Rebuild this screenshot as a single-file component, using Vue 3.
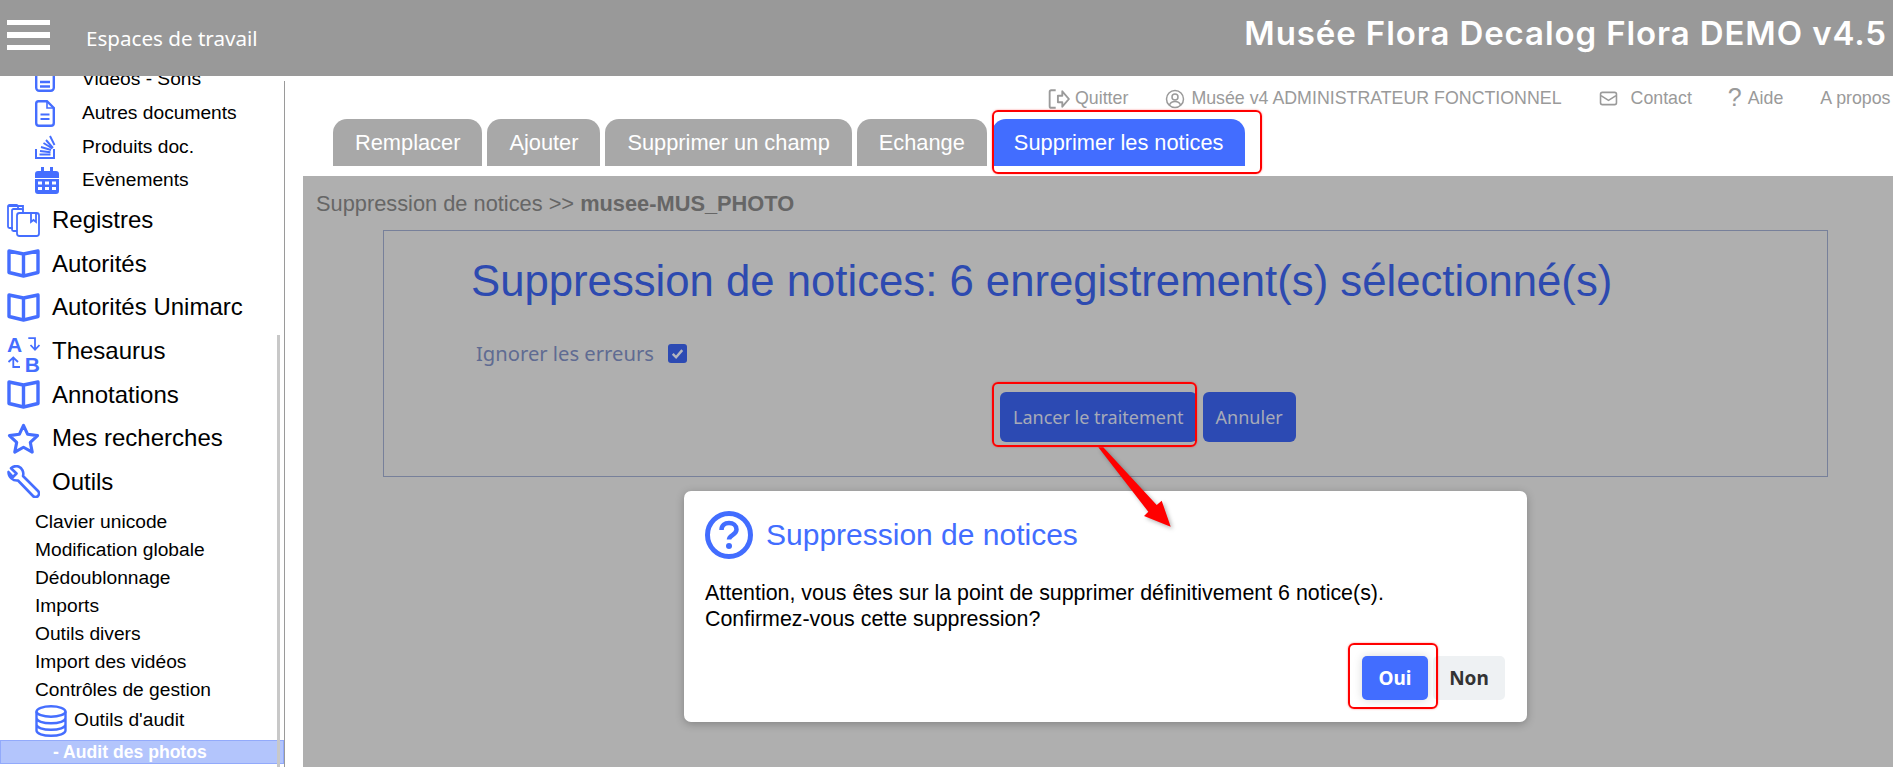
<script setup>
const subTop = [
  { label: 'Vidéos - Sons', icon: 'video' },
  { label: 'Autres documents', icon: 'doc' },
  { label: 'Produits doc.', icon: 'stack' },
  { label: 'Evènements', icon: 'cal' }
]
const main = [
  { label: 'Registres', icon: 'reg' },
  { label: 'Autorités', icon: 'book' },
  { label: 'Autorités Unimarc', icon: 'book' },
  { label: 'Thesaurus', icon: 'thes' },
  { label: 'Annotations', icon: 'book' },
  { label: 'Mes recherches', icon: 'star' },
  { label: 'Outils', icon: 'wrench' }
]
const tools = ['Clavier unicode', 'Modification globale', 'Dédoublonnage', 'Imports', 'Outils divers', 'Import des vidéos', 'Contrôles de gestion']
const tabs = ['Remplacer', 'Ajouter', 'Supprimer un champ', 'Echange']
</script>

<template>
  <div class="root">
    <svg class="defs" aria-hidden="true">
      <symbol id="video" viewBox="0 0 24 27" preserveAspectRatio="xMinYMid"><rect x="1.2" y="1.2" width="17.6" height="24.600" rx="3" fill="none" stroke="currentColor" stroke-width="2.400"/><path d="M5 17h10M5 21.500h10" stroke="currentColor" stroke-width="2.400"/></symbol>
      <symbol id="doc" viewBox="0 0 24 27" preserveAspectRatio="xMinYMid"><path d="M3.500 1.200H12L18.800 8V23a2.800 2.800 0 0 1-2.800 2.800H4A2.800 2.800 0 0 1 1.200 23V3.500A2.300 2.300 0 0 1 3.500 1.200Z" fill="none" stroke="currentColor" stroke-width="2.400"/><path d="M12 1.500V8h6.500" fill="none" stroke="currentColor" stroke-width="1.600"/><path d="M5.500 14.500h9M5.500 19h9" stroke="currentColor" stroke-width="2.200"/></symbol>
      <symbol id="stack" viewBox="0 0 24 27" preserveAspectRatio="xMinYMid"><path d="M1 16v9h18v-9" fill="none" stroke="currentColor" stroke-width="2"/><path d="M4.500 21.500h11M5 18l10.500 1.200M6 14l10 3M8.500 10l8.800 5.500M11 7l7 8M15 3l4.500 9" stroke="currentColor" stroke-width="1.900" fill="none"/></symbol>
      <symbol id="cal" viewBox="0 0 24 27" preserveAspectRatio="xMinYMid"><path d="M6 0h3v4H15V0h3v4h3a3 3 0 0 1 3 3v4H0V7a3 3 0 0 1 3-3h3ZM0 12h24v12a3 3 0 0 1-3 3H3a3 3 0 0 1-3-3Z" fill="currentColor"/><path d="M3 14.500h4v3H3ZM10 14.500h4v3h-4ZM17 14.500h4v3h-4ZM3 20h4v3H3ZM10 20h4v3h-4ZM17 20h4v3h-4Z" fill="#fff"/></symbol>
      <symbol id="reg" viewBox="0 0 33 33"><g fill="none" stroke="currentColor" stroke-width="1.800"><path d="M11 5V2.500A1.500 1.500 0 0 0 9.500 1H2.500A1.500 1.500 0 0 0 1 2.500v20A1.500 1.500 0 0 0 2.500 24H6"/><path d="M1 2h15v4"/><path d="M16 9V6.500A1.500 1.500 0 0 0 14.500 5H6.500A1.500 1.500 0 0 0 5 6.500v19A1.500 1.500 0 0 0 6.500 27H10"/><rect x="10" y="9" width="22" height="23" rx="2.500"/><path d="M24 9V18l2.500-2 2.500 2V9"/></g></symbol>
      <symbol id="book" viewBox="0 0 33 30"><path d="M2 2.500 16.500 5.500 31 2.500V24L16.500 27.500 2 24ZM16.500 5.500V27.500" fill="none" stroke="currentColor" stroke-width="3.400" stroke-linejoin="round"/></symbol>
      <symbol id="thesarrows" viewBox="0 0 33 33"><path d="M21.300 3.200H28V14.500M23.500 10 28 14.800 32.500 10M6.300 22.500V32H13M1.500 27 6.300 22.500 11 27" fill="none" stroke="currentColor" stroke-width="1.800"/></symbol>
      <symbol id="star" viewBox="0 0 34 32"><path d="M17 2.500 21.300 11.700 31.500 13 24 20 26 30 17 25 8 30 10 20 2.500 13 12.700 11.700Z" fill="none" stroke="currentColor" stroke-width="3.200" stroke-linejoin="round"/></symbol>
      <symbol id="wrench" viewBox="0 0 33 33"><path d="M11.500 1.500A8 8 0 0 0 4 3.200L9.500 8.500 6 12 1.500 7A8.500 8.500 0 0 0 11 15.500L26 31a3.500 3.500 0 0 0 5-5L16 11A8 8 0 0 0 11.500 1.500Z" fill="none" stroke="currentColor" stroke-width="2.600" stroke-linejoin="round"/></symbol>
      <symbol id="db" viewBox="0 0 32 32"><g fill="none" stroke="currentColor" stroke-width="2.400"><ellipse cx="16" cy="6.500" rx="14.500" ry="5.300"/><path d="M1.500 6.500V25.500C1.500 28.500 8 30.800 16 30.800S30.500 28.500 30.500 25.500V6.500M1.500 13C1.500 16 8 18.300 16 18.300S30.500 16 30.500 13M1.500 19.500C1.500 22.500 8 24.800 16 24.800S30.500 22.500 30.500 19.500"/></g></symbol>
    </svg>

    <header class="header">
      <div class="burger"><span></span><span></span><span></span></div>
      <div class="workspaces">Espaces de travail</div>
      <div class="title">Musée Flora Decalog Flora DEMO v4.5</div>
    </header>

    <div class="body">
      <aside class="sidebar">
        <ul class="group sub-top">
          <li v-for="it in subTop" :key="it.label" class="sub-row">
            <svg class="sub-icon"><use :href="'#' + it.icon"/></svg>
            <span>{{ it.label }}</span>
          </li>
        </ul>
        <ul class="group mains">
          <li v-for="it in main" :key="it.label" class="main-row">
            <span v-if="it.icon === 'thes'" class="thes">
              <svg class="thes-arrows"><use href="#thesarrows"/></svg>
              <b class="thes-a">A</b><b class="thes-b">B</b>
            </span>
            <svg v-else class="main-icon"><use :href="'#' + it.icon"/></svg>
            <span>{{ it.label }}</span>
          </li>
        </ul>
        <ul class="group tools">
          <li v-for="t in tools" :key="t" class="tool-row">{{ t }}</li>
        </ul>
        <div class="audit-row">
          <svg class="db-icon"><use href="#db"/></svg>
          <span>Outils d'audit</span>
        </div>
        <div class="active-row">- Audit des photos</div>
        <div class="scrollbar"></div>
        <div class="divider"></div>
      </aside>

      <main class="content">
        <nav class="toplinks">
          <span class="link l-quit">
            <svg class="tl-icon" viewBox="0 0 20 20"><path d="M7 2H3a1.500 1.500 0 0 0-1.500 1.500v13A1.500 1.500 0 0 0 3 18h4M9 7h4V3l6 7-6 7v-4H9Z" fill="none" stroke="currentColor" stroke-width="1.700" stroke-linejoin="round"/></svg>
            Quitter
          </span>
          <span class="link l-user">
            <svg class="tl-icon user" viewBox="0 0 20 20"><g fill="none" stroke="currentColor" stroke-width="1.500"><circle cx="10" cy="10" r="8.500"/><circle cx="10" cy="8" r="3"/><path d="M4.500 16c1-3 3-3.500 5.500-3.500s4.500.5 5.500 3.500"/></g></svg>
            Musée v4 ADMINISTRATEUR FONCTIONNEL
          </span>
          <span class="link l-contact">
            <svg class="tl-icon mail" viewBox="0 0 20 16"><g fill="none" stroke="currentColor" stroke-width="1.700"><rect x="1.500" y="1.500" width="17" height="13" rx="2"/><path d="M2 5l8 5 8-5"/></g></svg>
            Contact
          </span>
          <span class="link l-help"><i class="q">?</i>Aide</span>
          <span class="link l-about">A propos</span>
        </nav>

        <div class="tabs">
          <button v-for="t in tabs" :key="t" class="tab">{{ t }}</button>
          <button class="tab active">Supprimer les notices</button>
        </div>

        <section class="panel">
          <div class="crumb">Suppression de notices &gt;&gt; <b>musee-MUS_PHOTO</b></div>
          <div class="frame">
            <h1 class="heading">Suppression de notices: 6 enregistrement(s) sélectionné(s)</h1>
            <div class="ignore">
              <span>Ignorer les erreurs</span>
              <span class="check">
                <svg viewBox="0 0 20 20"><path d="M5 10.500l3.500 3.500L15 6.500" fill="none" stroke="#b4b6be" stroke-width="2.600"/></svg>
              </span>
            </div>
            <div class="actions">
              <button class="btn">Lancer le traitement</button>
              <button class="btn">Annuler</button>
            </div>
          </div>
        </section>
      </main>
    </div>

    <div class="modal">
      <div class="modal-head">
        <svg class="q-icon" viewBox="0 0 48 48">
          <circle cx="24" cy="24" r="21.500" fill="none" stroke="currentColor" stroke-width="5"/>
          <path d="M16.500 19c0-4.500 3.300-7 7.500-7s7.500 2.500 7.500 6.500c0 5.500-7.500 5.500-7.500 10" fill="none" stroke="currentColor" stroke-width="4.500"/>
          <circle cx="24" cy="35" r="3" fill="currentColor"/>
        </svg>
        <h2>Suppression de notices</h2>
      </div>
      <p>Attention, vous êtes sur la point de supprimer définitivement 6 notice(s).<br>Confirmez-vous cette suppression?</p>
      <div class="modal-actions">
        <button class="m-btn yes">Oui</button>
        <button class="m-btn no">Non</button>
      </div>
    </div>

    <div class="mark mark-tab"></div>
    <div class="mark mark-run"></div>
    <div class="mark mark-yes"></div>
    <svg class="arrow" viewBox="0 0 90 95">
      <polygon points="4.300,2.300 9.300,2.300 62.700,60 67.700,55.700 76.700,81.700 50,71 54.300,66.700" fill="#f00"/>
    </svg>
  </div>
</template>

<style>
html, body { margin: 0; overflow: hidden; background: #fff; }
</style>

<style scoped>
.root { position: relative; width: 1893px; height: 767px; overflow: hidden; font-family: "Liberation Sans", Arial, sans-serif; background: #fff; color: #000; }
.defs { position: absolute; width: 0; height: 0; }
ul { list-style: none; margin: 0; padding: 0; }
button { border: 0; font-family: inherit; cursor: pointer; }

.header { height: 76px; background: #999; display: flex; align-items: center; color: #fff; box-sizing: border-box; padding-right: 6px; }
.burger { width: 43px; margin-left: 7px; display: flex; flex-direction: column; gap: 7px; margin-top: -6px; }
.burger span { height: 5.500px; background: #fff; }
.workspaces { margin-left: 36px; margin-top: -1px; font-family: "Noto Sans", sans-serif; font-size: 20.600px; }
.title { margin-left: auto; font-family: Inter, sans-serif; font-weight: 600; font-size: 33px; letter-spacing: .9px; margin-top: -10px; white-space: nowrap; }

.body { display: flex; height: 691px; }
.sidebar { position: relative; width: 285px; flex: none; overflow: hidden; font-size: 19.200px; }
.sub-top { margin-top: -15px; }
.sub-row { height: 33.500px; display: flex; align-items: center; padding-left: 35px; }
.sub-row:first-child { height: 35.500px; }
.sub-row span { margin-left: 23px; white-space: nowrap; }
.sub-icon { width: 24px; height: 27px; color: #456eff; flex: none; }
.mains { margin-top: 1.500px; }
.main-row { height: 43.600px; display: flex; align-items: center; padding-left: 7px; font-size: 24px; }
.main-row > span:last-child { margin-left: 12px; white-space: nowrap; }
.main-icon { width: 33px; height: 33px; color: #456eff; flex: none; }
.thes { position: relative; width: 33px; height: 33px; flex: none; color: #456eff; }
.thes-arrows { position: absolute; inset: 0; width: 33px; height: 33px; overflow: visible; }
.thes-a, .thes-b { position: absolute; font-size: 21px; line-height: 21px; font-weight: 700; }
.thes-a { left: 0; top: -1px; }
.thes-b { right: 0; top: 19px; }
.tools { margin-top: 4px; padding-left: 35px; }
.tool-row { height: 28px; line-height: 28px; white-space: nowrap; }
.audit-row { display: flex; align-items: center; height: 32px; padding-left: 35px; margin-top: 1px; }
.audit-row span { margin-left: 7px; margin-top: -2px; }
.db-icon { width: 32px; height: 32px; color: #456eff; }
.active-row { margin-top: 3px; height: 24px; box-sizing: border-box; line-height: 22px; padding-left: 52px; background: #b3c5fc; border: 1px solid #92aafb; color: #fff; font-weight: 700; font-size: 17.600px; width: 284px; }
.scrollbar { position: absolute; left: 277px; top: 259px; bottom: 0; width: 3px; background: #c8c8c8; }
.divider { position: absolute; left: 284px; top: 5px; bottom: 0; width: 1px; background: #9a9a9a; }

.content { flex: 1; min-width: 0; display: flex; flex-direction: column; }
.toplinks { height: 43px; padding-top: 2px; box-sizing: border-box; display: flex; align-items: center; font-size: 17.800px; color: #9a9a9a; white-space: nowrap; position: relative; }
.link { display: flex; align-items: center; flex: none; }
.tl-icon { width: 22px; height: 22px; margin-right: 5px; }
.tl-icon.user { width: 20px; height: 20px; margin-right: 6px; }
.tl-icon.mail { width: 19px; height: 15px; margin-right: 13px; }
.l-quit { margin-left: 763px; }
.l-user { margin-left: 37px; }
.l-contact { margin-left: 37px; }
.l-help { margin-left: 36px; }
.q { font-style: normal; font-size: 25px; margin-right: 6px; margin-top: -3px; }
.l-about { margin-left: 37px; }

.tabs { display: flex; gap: 5px; padding-left: 48px; height: 47px; }
.tab { height: 47px; padding: 0 22px; background: #a8a8a8; color: #fff; font-size: 21.800px; border-radius: 14px 14px 0 0; white-space: nowrap; }
.active { background: #426dff; }

.panel { margin: 10px 0 0 18px; flex: 1; background: #afafaf; min-height: 0; padding-top: 15px; box-sizing: border-box; }
.crumb { margin-left: 13px; font-size: 21.800px; line-height: 26px; color: #666; }
.frame { margin: 13px 0 0 80px; width: 1445px; height: 247px; box-sizing: border-box; border: 1px solid #77809a; padding-left: 87px; }
.heading { margin: 23px 0 0; font-weight: 400; font-size: 43.700px; line-height: 54px; color: #2d4ab0; white-space: nowrap; }
.ignore { display: flex; align-items: center; margin: 32px 0 0 5px; font-family: "Noto Sans", sans-serif; font-size: 20.200px; color: #5f6b92; height: 26px; }
.check { width: 19px; height: 19px; background: #2c4ab3; border-radius: 3px; margin-left: 14px; display: flex; }
.check svg { width: 19px; height: 19px; }
.actions { display: flex; gap: 6px; margin: 26px 0 0 529px; }
.btn { height: 50px; padding: 0 13px; background: #2c4ab3; color: #a7aab8; border-radius: 6px; font-family: "Noto Sans", sans-serif; font-size: 18px; white-space: nowrap; }

.modal { position: absolute; left: 684px; top: 491px; width: 843px; height: 231px; box-sizing: border-box; background: #fff; border-radius: 7px; box-shadow: 0 2px 8px rgba(0,0,0,.25); padding: 20px 22px 0 21px; }
.modal-head { display: flex; align-items: center; gap: 13px; color: #426dff; height: 48px; }
.q-icon { width: 48px; height: 48px; flex: none; }
.modal-head h2 { margin: 0; font-weight: 400; font-size: 30px; }
.modal p { margin: 21px 0 0; font-size: 21.400px; line-height: 26px; }
.modal-actions { display: flex; justify-content: flex-end; gap: 5px; margin-top: 24px; }
.m-btn { height: 44px; border-radius: 5px; font-weight: 700; font-size: 19px; font-family: "Noto Sans", "DejaVu Sans", sans-serif; }
.yes { width: 66px; background: #426dff; color: #fff; box-shadow: 0 0 10px rgba(0,0,0,.15); }
.no { width: 72px; background: #eef1f3; color: #333; }

.mark { position: absolute; box-sizing: border-box; border: 2px solid #f00; border-radius: 6px; box-shadow: 0 0 2px rgba(255,0,0,.5); }
.mark-tab { left: 992px; top: 110px; width: 270px; height: 64px; }
.mark-run { left: 992px; top: 382px; width: 205px; height: 65px; }
.mark-yes { left: 1348px; top: 643px; width: 90px; height: 66px; }
.arrow { position: absolute; left: 1094px; top: 445px; width: 90px; height: 95px; filter: drop-shadow(2px 2px 2px rgba(0,0,0,.3)); }
</style>
